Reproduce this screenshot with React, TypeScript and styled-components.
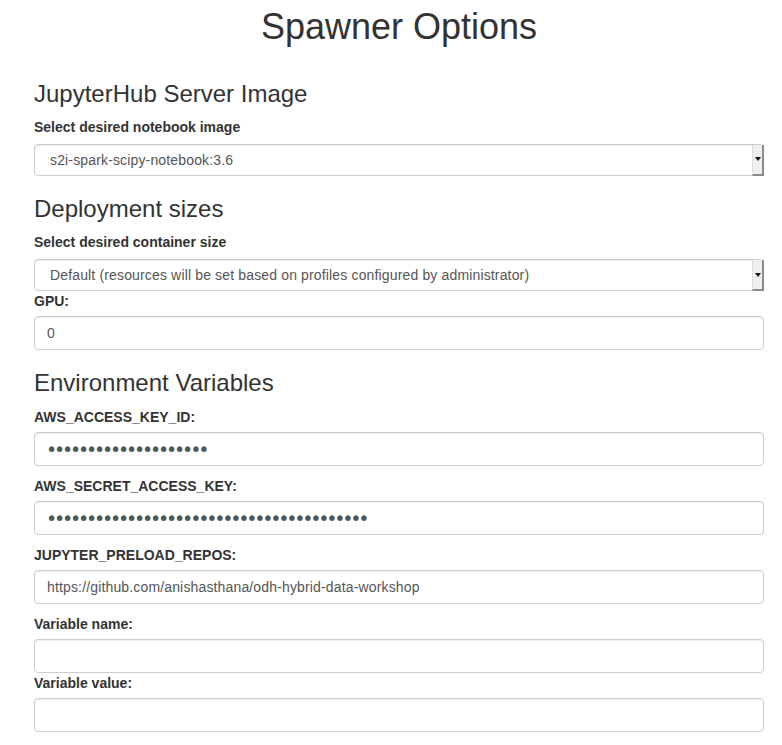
import React from "react";
import styled, { createGlobalStyle } from "styled-components";

const GlobalStyle = createGlobalStyle`
  html, body {
    margin: 0;
    padding: 0;
    background: #ffffff;
  }
  body {
    font-family: "Liberation Sans", Arial, Helvetica, sans-serif;
    font-size: 14px;
    line-height: 1.42857143;
    color: #333333;
  }
  * { box-sizing: border-box; }
`;

const Page = styled.div`
  padding: 7px 18px 0 34px;
`;

const Title = styled.h1`
  margin: 0 0 34px;
  font-size: 36px;
  font-weight: 500;
  line-height: 1.1;
  text-align: center;
  color: #333333;
`;

const SectionTitle = styled.h3`
  margin: 20px 0 10px;
  font-size: 24px;
  font-weight: 500;
  line-height: 1.1;
  color: #333333;
`;

const Field = styled.div<{ $gap: number }>`
  display: flex;
  flex-direction: column;
  margin-bottom: ${(p) => p.$gap}px;
`;

const Label = styled.label`
  display: block;
  margin-bottom: 5px;
  font-weight: 700;
  line-height: 20px;
  color: #333333;
`;

const Input = styled.input`
  display: block;
  width: 100%;
  height: 34px;
  padding: 6px 12px;
  font-family: inherit;
  font-size: 14px;
  letter-spacing: 0.15px;
  line-height: 1.42857143;
  color: #555555;
  background: #ffffff;
  border: 1px solid #cccccc;
  border-radius: 4px;
  box-shadow: inset 0 1px 1px rgba(0, 0, 0, 0.075);
  outline: none;

  &[type="password"] {
    padding: 0 12px 0 11px;
    font-family: "DejaVu Sans", sans-serif;
    font-size: 19px;
    letter-spacing: -3.2px;
    line-height: 32px;
  }
`;

const SelectWrap = styled.div`
  position: relative;
  width: 100%;
  height: 32px;
  margin-top: 2px;
`;

const Select = styled.select`
  display: block;
  width: 100%;
  height: 32px;
  padding: 5px 20px 5px 15px;
  font-family: inherit;
  font-size: 14px;
  letter-spacing: 0.15px;
  color: #555555;
  background: #ffffff;
  border: 1px solid #cccccc;
  border-radius: 4px;
  box-shadow: inset 0 1px 1px rgba(0, 0, 0, 0.075);
  appearance: none;
  -webkit-appearance: none;
  outline: none;
`;

const ArrowButton = styled.span`
  position: absolute;
  top: 1px;
  right: 0;
  width: 12px;
  height: 31px;
  background: #efefef;
  border-left: 1px solid #dcdcdc;
  border-right: 2px solid #8a8a8a;
  border-bottom: 2px solid #8a8a8a;
  display: flex;
  align-items: center;
  justify-content: center;
  pointer-events: none;

  &::after {
    content: "";
    display: block;
    width: 0;
    height: 0;
    border-left: 3px solid transparent;
    border-right: 3px solid transparent;
    border-top: 4px solid #111111;
  }
`;

type Opt = { value: string; label: string };

const SelectField: React.FC<{ id: string; options: Opt[] }> = ({ id, options }) => (
  <SelectWrap>
    <Select id={id} defaultValue={options[0].value}>
      {options.map((o) => (
        <option key={o.value} value={o.value}>
          {o.label}
        </option>
      ))}
    </Select>
    <ArrowButton />
  </SelectWrap>
);

export default function App() {
  return (
    <>
      <GlobalStyle />
      <Page>
        <Title>Spawner Options</Title>

        <SectionTitle>JupyterHub Server Image</SectionTitle>
        <Field $gap={0}>
          <Label htmlFor="image">Select desired notebook image</Label>
          <SelectField
            id="image"
            options={[{ value: "s2i-spark-scipy-notebook:3.6", label: "s2i-spark-scipy-notebook:3.6" }]}
          />
        </Field>

        <SectionTitle>Deployment sizes</SectionTitle>
        <Field $gap={0}>
          <Label htmlFor="size">Select desired container size</Label>
          <SelectField
            id="size"
            options={[
              {
                value: "default",
                label: "Default (resources will be set based on profiles configured by administrator)",
              },
            ]}
          />
        </Field>
        <Field $gap={0}>
          <Label htmlFor="gpu">GPU:</Label>
          <Input id="gpu" type="text" defaultValue="0" />
        </Field>

        <SectionTitle>Environment Variables</SectionTitle>
        <Field $gap={10}>
          <Label htmlFor="akid">AWS_ACCESS_KEY_ID:</Label>
          <Input id="akid" type="password" defaultValue={"x".repeat(20)} />
        </Field>
        <Field $gap={10}>
          <Label htmlFor="sak">AWS_SECRET_ACCESS_KEY:</Label>
          <Input id="sak" type="password" defaultValue={"x".repeat(40)} />
        </Field>
        <Field $gap={10}>
          <Label htmlFor="repos">JUPYTER_PRELOAD_REPOS:</Label>
          <Input
            id="repos"
            type="text"
            defaultValue="https://github.com/anishasthana/odh-hybrid-data-workshop"
          />
        </Field>
        <Field $gap={0}>
          <Label htmlFor="varname">Variable name:</Label>
          <Input id="varname" type="text" />
        </Field>
        <Field $gap={0}>
          <Label htmlFor="varvalue">Variable value:</Label>
          <Input id="varvalue" type="text" />
        </Field>
      </Page>
    </>
  );
}
